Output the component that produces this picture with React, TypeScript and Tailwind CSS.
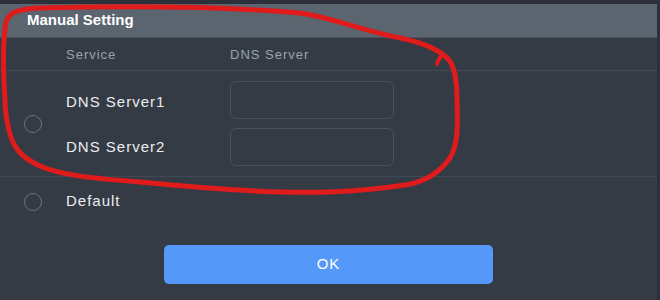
import React from 'react';

const font = { fontFamily: '"Liberation Sans", Arial, sans-serif' };

function Radio() {
  return (
    <span className="block w-[18px] h-[18px] rounded-full border-[1.5px] border-[#6b737c]" />
  );
}

function Annotation() {
  return (
    <svg
      className="absolute inset-0 pointer-events-none"
      width="660"
      height="300"
      viewBox="0 0 660 300"
      fill="none"
    >
      <path
        d="M5 100 C3 70 3 40 6 22 C9 12 18 9 40 8 C120 6 220 6 300 13 C330 17 360 30 400 38 C425 43 440 50 449 60 C455 68 457 80 457 100 C458 125 458 145 450 158 C440 172 425 182 405 185 C385 188 355 191 330 192 C270 194 200 188 140 182 C90 178 60 175 40 166 C22 158 13 148 9 130 C6 118 5 108 5 100"
        stroke="#e01b1b"
        strokeWidth="5"
        strokeLinecap="round"
        strokeLinejoin="round"
      />
      <path d="M443 55 C440 57 438 60 437 64" stroke="#e01b1b" strokeWidth="4" strokeLinecap="round" />
    </svg>
  );
}

export default function App() {
  return (
    <div className="relative w-[660px] h-[300px] flex bg-[#353b45] overflow-hidden" style={font}>
      <div className="w-[657px] flex flex-col">
        <div className="h-[4px] bg-[#2c3139]" />
        <div className="h-[34px] bg-[#5b6570] px-[27px] flex items-center border-b border-[#4a535d]">
          <span className="text-[15px] font-bold text-white">Manual Setting</span>
        </div>

        <div className="h-[33px] pt-[2px] flex items-center border-b border-[#414953] text-[13px] tracking-[1px] text-[#98a3ae]">
          <span className="w-[164px] ml-[66px]">Service</span>
          <span>DNS Server</span>
        </div>

        <div className="flex items-center py-[10px] border-b border-[#414953]">
          <div className="w-[66px] pl-[24px]">
            <Radio />
          </div>
          <div className="flex flex-col gap-[9px]">
            {['DNS Server1', 'DNS Server2'].map((label, i) => (
              <div key={label} className="flex items-center">
                <span
                  className={
                    'w-[164px] text-[15px] tracking-[1px] text-[#eceef0] ' +
                    (i === 0 ? 'pt-[4px]' : 'pt-0')
                  }
                >
                  {label}
                </span>
                <input
                  className="w-[164px] h-[38px] rounded-[6px] border border-[#49525c] bg-transparent outline-none px-2 text-white"
                  style={font}
                />
              </div>
            ))}
          </div>
        </div>

        <div className="h-[46px] pt-[3px] flex items-center">
          <div className="w-[66px] pl-[24px]">
            <Radio />
          </div>
          <span className="text-[15px] tracking-[1px] text-[#eceef0]">Default</span>
        </div>

        <div className="mt-[22px] flex justify-center">
          <button className="w-[329px] h-[39px] rounded-[5px] bg-[#5498fa] text-white text-[15px] tracking-[1px]">
            OK
          </button>
        </div>
      </div>
      <div className="w-[3px] bg-[#2c3139]" />
      <Annotation />
    </div>
  );
}
